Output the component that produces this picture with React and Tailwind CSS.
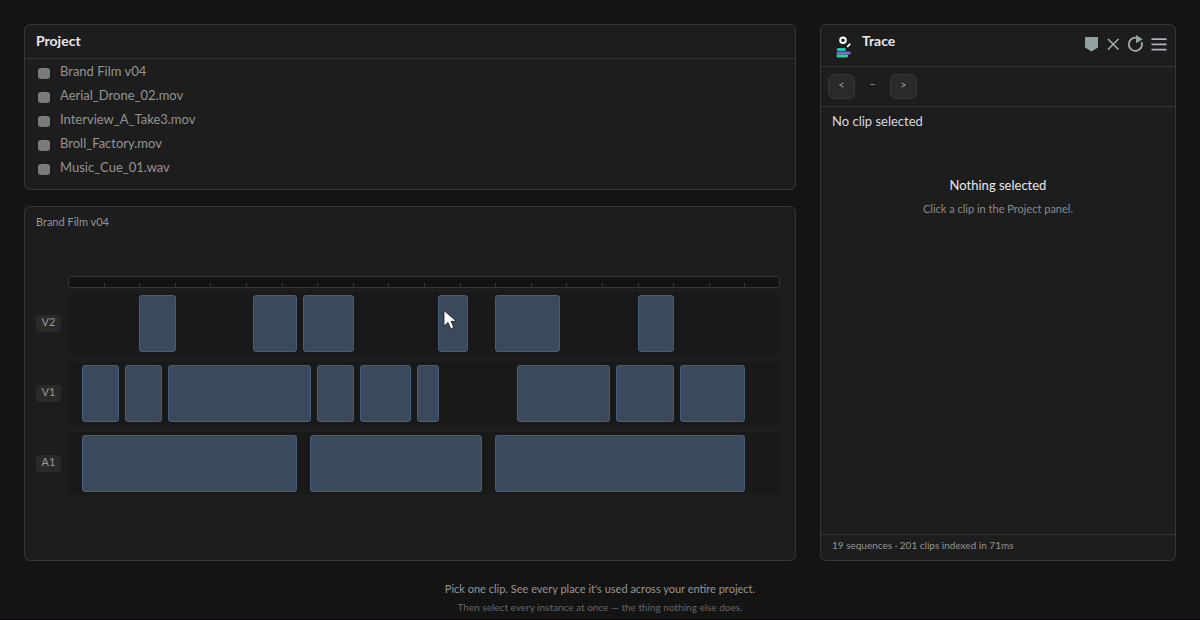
const projectItems = [
  "Brand Film v04",
  "Aerial_Drone_02.mov",
  "Interview_A_Take3.mov",
  "Broll_Factory.mov",
  "Music_Cue_01.wav",
];

// clips are [start, end] in percent of the sequence
const tracks = [
  {
    name: "V2",
    clips: [
      [10, 15],
      [26, 32],
      [33, 40],
      [52, 56],
      [60, 69],
      [80, 85],
    ],
  },
  {
    name: "V1",
    clips: [
      [2, 7],
      [8, 13],
      [14, 34],
      [35, 40],
      [41, 48],
      [49, 52],
      [63, 76],
      [77, 85],
      [86, 95],
    ],
  },
  {
    name: "A1",
    clips: [
      [2, 32],
      [34, 58],
      [60, 95],
    ],
  },
];

const RULER_STEPS = 20;

const TraceLogo = () => (
  <svg className="h-6 w-4" viewBox="0 0 16 24" fill="none" aria-hidden="true">
    <circle cx="7" cy="6.2" r="2.8" stroke="#ffffff" strokeWidth="2" />
    <path d="M11.7 12.3L13.7 10.3" stroke="#ffffff" strokeWidth="1.8" strokeLinecap="round" />
    <rect x="0.8" y="14" width="9.2" height="3" rx="1.5" fill="#22c9b5" />
    <rect x="0.4" y="17.4" width="14.4" height="3" rx="1.5" fill="#8b5ce0" />
    <rect x="0.4" y="20.6" width="11.8" height="2.9" rx="1.4" fill="#2ccf96" />
  </svg>
);

const MarkerIcon = () => (
  <svg className="h-4 w-4" viewBox="0 0 16 16" aria-hidden="true">
    <path d="M2 1H15V11.5L8.5 15.5L2 11.5Z" fill="#8fa3a0" />
  </svg>
);

const CloseIcon = () => (
  <svg className="h-4 w-4" viewBox="0 0 16 16" aria-hidden="true">
    <path d="M3 3L13.5 13.5M13.5 3L3 13.5" stroke="#a3b1af" strokeWidth="1.5" />
  </svg>
);

const RefreshIcon = () => (
  <svg className="h-4 w-4 overflow-visible" viewBox="0 0 16 16" fill="none" aria-hidden="true">
    <path d="M9.5 1.8A6.6 6.6 0 1 0 14.6 6" stroke="#a0afad" strokeWidth="1.8" />
    <path d="M9 -1L15.7 3.3L9 7.3Z" fill="#8fa3a0" />
  </svg>
);

const MenuIcon = () => (
  <svg className="h-4 w-4" viewBox="0 0 16 16" aria-hidden="true">
    <path d="M0.5 3.2H15.5M0.5 8.4H15.5M0.5 13.6H15.5" stroke="#b0b0c4" strokeWidth="1.7" />
  </svg>
);

const Cursor = () => (
  <svg
    className="absolute left-1 top-3 z-10 h-6 w-4 overflow-visible"
    viewBox="0 0 16 24"
    aria-hidden="true"
  >
    <path
      d="M1 2.5V18L5 14.5L7.8 20.8L10.8 19.5L8 13.3H13.3Z"
      fill="#ffffff"
      stroke="#1b1b1b"
      strokeWidth="0.8"
    />
  </svg>
);

const ProjectPanel = () => (
  <section className="rounded-md border border-[#363636] bg-[#1d1d1d]">
    <h2 className="h-[34px] border-b border-[#363636] px-[11px] pt-[6px] text-sm font-bold leading-5 text-[#e8e8f0]">
      Project
    </h2>
    <ul className="px-[13px] pb-[10px]">
      {projectItems.map((item) => (
        <li key={item} className="flex h-6 items-center gap-[10px]">
          <span className="mt-[5px] h-[11px] w-3 rounded-[3px] bg-[#7b7b7b]"></span>
          <span className="text-[13px] leading-5 text-[#949494]">{item}</span>
        </li>
      ))}
    </ul>
  </section>
);

const Track = ({ track }) => (
  <div className="flex items-center">
    <span className="mr-[7px] h-[17px] w-[25px] rounded bg-[#2a2a2a] text-center text-[11px] leading-[14px] text-[#999999]">
      {track.name}
    </span>
    <div className="grid h-[63px] flex-1 grid-cols-[repeat(100,minmax(0,1fr))] rounded bg-[#191919] py-[3px]">
      {track.clips.map(([start, end]) => (
        <div
          key={start}
          className="relative row-start-1 -mr-px rounded-[3px] border border-[#46607a] bg-[#3a4a5c]"
          style={{ gridColumn: `${start + 1} / ${end + 1}` }}
        >
          {track.name === "V2" && start === 52 && <Cursor />}
        </div>
      ))}
    </div>
  </div>
);

const TimelinePanel = () => (
  <section className="flex-1 rounded-md border border-[#363636] bg-[#1d1d1d] px-[11px]">
    <h2 className="pt-[7px] text-[11px] leading-4 text-[#949494]">Brand Film v04</h2>
    <div className="mt-[46px] pr-1">
      <div className="ml-8 grid h-3 grid-cols-20 rounded-xs bg-[#131313] outline outline-1 -outline-offset-1 outline-[#363636]">
        {Array.from({ length: RULER_STEPS }, (_, i) => (
          <span
            key={i}
            className="-mr-px mt-[7px] border-r border-[#363636] last:border-r-0"
          ></span>
        ))}
      </div>
      <div className="mt-1 flex flex-col gap-[7px]">
        {tracks.map((track) => (
          <Track key={track.name} track={track} />
        ))}
      </div>
    </div>
  </section>
);

const NavButton = ({ label, children }) => (
  <button
    type="button"
    aria-label={label}
    className="flex h-[25px] w-[27px] justify-center rounded-md border border-[#363636] bg-[#2a2a2a] pt-[2px] text-[11px] leading-4 text-[#999999]"
  >
    {children}
  </button>
);

const TracePanel = () => (
  <aside className="flex w-[356px] shrink-0 flex-col rounded-md border border-[#363636] bg-[#1d1d1d]">
    <header className="flex h-[42px] border-b border-[#363636] pl-[15px] pr-2 pt-[6px]">
      <div className="pt-[3px]">
        <TraceLogo />
      </div>
      <h2 className="ml-[10px] flex-1 text-sm font-bold leading-5 text-[#e8e8f0]">Trace</h2>
      <div className="flex h-[26px] items-center gap-[6px]">
        <button type="button" aria-label="Add marker">
          <MarkerIcon />
        </button>
        <button type="button" aria-label="Clear">
          <CloseIcon />
        </button>
        <button type="button" aria-label="Refresh">
          <RefreshIcon />
        </button>
        <button type="button" aria-label="Menu" className="ml-[2px]">
          <MenuIcon />
        </button>
      </div>
    </header>
    <div className="flex h-10 border-b border-[#363636] px-[7px] pt-[7px]">
      <NavButton label="Previous">&lt;</NavButton>
      <span className="w-[35px] pt-[2px] text-center text-[11px] leading-4 text-[#949494]">–</span>
      <NavButton label="Next">&gt;</NavButton>
    </div>
    <p className="px-[11px] pt-1 text-[13px] leading-5 text-[#d8d8e0]">No clip selected</p>
    <div className="flex-1 pt-11 text-center">
      <p className="text-[13px] leading-5 text-[#e8e8f0]">Nothing selected</p>
      <p className="mt-[6px] text-[11px] leading-4 text-[#8a8a8a]">
        Click a clip in the Project panel.
      </p>
    </div>
    <footer className="h-[26px] border-t border-[#363636] px-[11px] pt-[2px] text-[10px] leading-4 text-[#949494]">
      19 sequences · 201 clips indexed in 71ms
    </footer>
  </aside>
);

const App = () => {
  return (
    <div className="flex min-h-screen flex-col border-b border-[#0c060c] bg-[#141414] px-6 pt-6 font-['Lato','Liberation_Sans',sans-serif]">
      <main className="flex flex-1 gap-6">
        <div className="flex min-w-0 flex-1 flex-col gap-4">
          <ProjectPanel />
          <TimelinePanel />
        </div>
        <TracePanel />
      </main>
      <div className="pb-1 pt-5 text-center">
        <p className="text-[11px] leading-4 text-[#949494]">
          Pick one clip. See every place it's used across your entire project.
        </p>
        <p className="mt-[2px] text-[10px] leading-4 text-[#666666]">
          Then select every instance at once — the thing nothing else does.
        </p>
      </div>
    </div>
  );
};

export default App;
